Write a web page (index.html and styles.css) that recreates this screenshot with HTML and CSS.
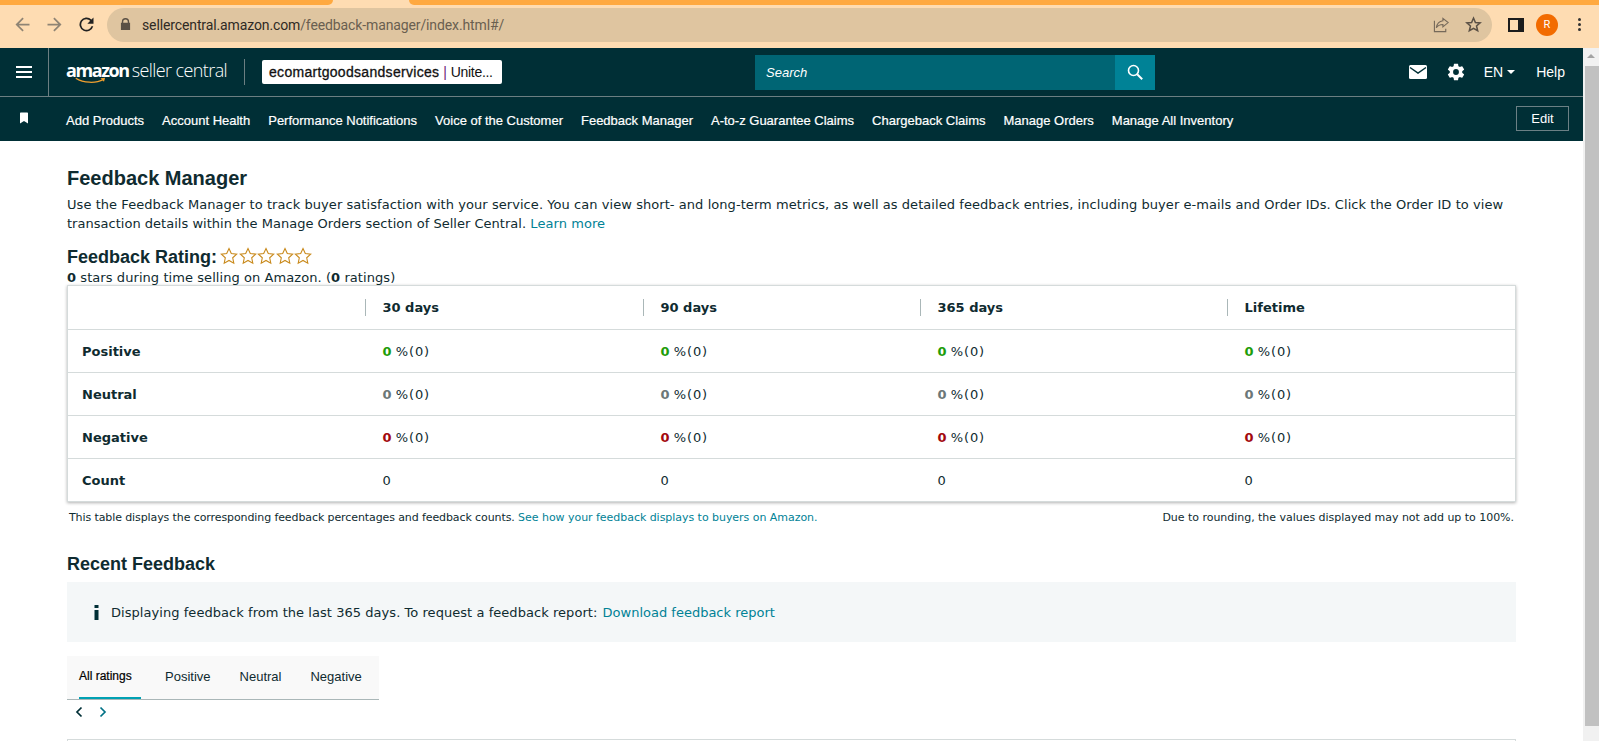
FILE: index.html
```html
<!DOCTYPE html>
<html lang="en">
<head>
    <meta charset="UTF-8">
    <title>Feedback Manager</title>
    <link rel="stylesheet" href="styles.css">
</head>
<body>
    <div class="tabstrip">
        <div class="tabstrip-left"></div>
        <div class="tabstrip-gap"></div>
        <div class="tabstrip-right"></div>
    </div>
    <div class="toolbar">
        <svg class="tb-icon" viewBox="0 0 24 24"><path d="M20 11H7.800l5.600-5.600L12 4l-8 8 8 8 1.400-1.400L7.800 13H20z" fill="#8f8474"/></svg>
        <svg class="tb-icon" viewBox="0 0 24 24"><path d="M4 11h12.200l-5.600-5.600L12 4l8 8-8 8-1.400-1.400 5.600-5.600H4z" fill="#8f8474"/></svg>
        <svg class="tb-icon" viewBox="0 0 24 24"><path d="M17.650 6.350A8 8 0 1 0 19.730 14h-2.080a6 6 0 1 1-1.410-6.240L13 11h7V4z" fill="#222"/></svg>
        <div class="omnibox">
            <svg class="lock" viewBox="0 0 12 14"><path d="M2 5V4a4 4 0 0 1 8 0v1h1v8H1V5zm1.500 0h5V4a2.500 2.500 0 0 0-5 0z" fill="#5a5045"/></svg>
            <span class="url"><span class="url-host">sellercentral.amazon.com</span>/feedback-manager/index.html#/</span>
            <svg class="omni-share" viewBox="0 0 18 18"><path d="M10.500 2.500 16 7l-5.500 4.500V9C7 9 5 10 3.500 12.500 4 9 6.500 5.500 10.500 5zM1.500 5v11.500h12v-3" fill="none" stroke="#75695a" stroke-width="1.200"/></svg>
            <svg class="omni-star" viewBox="0 0 18 18"><path d="M9 2.200l2 4.700 5 .4-3.800 3.300 1.200 5L9 13l-4.400 2.600 1.200-5L2 7.300l5-.4z" fill="none" stroke="#5a5045" stroke-width="1.600"/></svg>
        </div>
        <div class="sidepanel-icon"></div>
        <div class="avatar">R</div>
        <div class="dots"><i></i><i></i><i></i></div>
    </div>

    <div class="page">
        <div class="content">
            <header class="topbar">
                <button class="burger"><i></i><i></i><i></i></button>
                <div class="brand">
                    <span class="brand-amazon">amazon</span>
                    <span class="brand-seller">seller central</span>
                    <svg class="brand-smile" viewBox="0 0 44 9"><path d="M1 1.500C11 8 27 8.500 37 3" fill="none" stroke="#f0a030" stroke-width="1.600"/><path d="M33 1.500l6-.5-1.500 5z" fill="#f0a030"/></svg>
                </div>
                <div class="store-pill"><b>ecomartgoodsandservices</b> <span class="pipe">|</span> <span class="store-rest">Unite...</span></div>
                <div class="search">
                    <span class="search-input">Search</span>
                    <span class="search-btn">
                        <svg viewBox="0 0 18 18" width="18" height="18"><circle cx="7.500" cy="7.500" r="5" fill="none" stroke="#fff" stroke-width="1.600"/><path d="M11.200 11.200l5 5" stroke="#fff" stroke-width="2"/></svg>
                    </span>
                </div>
                <div class="top-actions">
                    <svg class="mail" viewBox="0 0 18 14"><rect width="18" height="14" rx="1.500" fill="#fff"/><path d="M1 2.500l8 5.500 8-5.500" fill="none" stroke="#002f36" stroke-width="1.500"/></svg>
                    <svg class="gear" viewBox="0 0 24 24"><path d="M19.430 12.980a7.800 7.800 0 0 0 0-1.960l2.110-1.650a.5.5 0 0 0 .12-.64l-2-3.460a.5.5 0 0 0-.61-.22l-2.490 1a7.300 7.300 0 0 0-1.690-.98l-.38-2.650A.49.49 0 0 0 14 2h-4a.49.49 0 0 0-.49.42l-.38 2.650a7.700 7.700 0 0 0-1.690.98l-2.490-1a.49.49 0 0 0-.61.22l-2 3.460a.49.49 0 0 0 .12.64l2.110 1.650a7.900 7.900 0 0 0 0 1.960l-2.110 1.650a.5.5 0 0 0-.12.64l2 3.460c.12.22.39.3.61.22l2.490-1c.52.4 1.080.73 1.690.98l.38 2.650c.03.24.24.42.49.42h4c.25 0 .46-.18.49-.42l.38-2.650a7.700 7.700 0 0 0 1.690-.98l2.490 1c.23.09.49 0 .61-.22l2-3.460a.5.5 0 0 0-.12-.64zM12 15.500a3.500 3.500 0 1 1 0-7 3.500 3.500 0 0 1 0 7z" fill="#fff"/></svg>
                    <span class="lang">EN<i class="caret"></i></span>
                    <span class="help">Help</span>
                </div>
            </header>
            <nav class="navbar">
                <svg class="bookmark" viewBox="0 0 10 12"><path d="M1 1.200Q1 .5 1.700.5h6.600q.7 0 .7.700V11.500L5 9 1 11.500z" fill="#fff"/></svg>
                <a>Add Products</a>
                <a>Account Health</a>
                <a>Performance Notifications</a>
                <a>Voice of the Customer</a>
                <a>Feedback Manager</a>
                <a>A-to-z Guarantee Claims</a>
                <a>Chargeback Claims</a>
                <a>Manage Orders</a>
                <a>Manage All Inventory</a>
                <button class="edit-btn">Edit</button>
            </nav>

            <main class="main">
                <h1 class="title">Feedback Manager</h1>
                <p class="intro">Use the Feedback Manager to track buyer satisfaction with your service. You can view short- and long-term metrics, as well as detailed feedback entries, including buyer e-mails and Order IDs. Click the Order ID to view <span class="intro-tail">transaction details within the Manage Orders section of Seller Central.</span> <a class="link">Learn more</a></p>
                <div class="rating-head">
                    <h2 class="subtitle">Feedback Rating:</h2>
                    <span class="stars">
                        <svg viewBox="0 0 18 18"><path d="M9 1.500l2.300 5 5.400.6-4 3.700 1.100 5.400L9 13.500l-4.800 2.700 1.100-5.400-4-3.700 5.400-.6z" fill="none" stroke="#c98a1c" stroke-width="1.100"/></svg>
                        <svg viewBox="0 0 18 18"><path d="M9 1.500l2.300 5 5.400.6-4 3.700 1.100 5.400L9 13.500l-4.800 2.700 1.100-5.400-4-3.700 5.400-.6z" fill="none" stroke="#c98a1c" stroke-width="1.100"/></svg>
                        <svg viewBox="0 0 18 18"><path d="M9 1.500l2.300 5 5.400.6-4 3.700 1.100 5.400L9 13.500l-4.800 2.700 1.100-5.400-4-3.700 5.400-.6z" fill="none" stroke="#c98a1c" stroke-width="1.100"/></svg>
                        <svg viewBox="0 0 18 18"><path d="M9 1.500l2.300 5 5.400.6-4 3.700 1.100 5.400L9 13.500l-4.800 2.700 1.100-5.400-4-3.700 5.400-.6z" fill="none" stroke="#c98a1c" stroke-width="1.100"/></svg>
                        <svg viewBox="0 0 18 18"><path d="M9 1.500l2.300 5 5.400.6-4 3.700 1.100 5.400L9 13.500l-4.800 2.700 1.100-5.400-4-3.700 5.400-.6z" fill="none" stroke="#c98a1c" stroke-width="1.100"/></svg>
                    </span>
                </div>
                <div class="rating-sub"><b>0</b> stars during time selling on Amazon. (<b>0</b> ratings)</div>

                <table class="fb-table">
                    <colgroup>
                        <col class="col-label"><col class="col-30"><col class="col-90"><col class="col-365"><col class="col-life">
                    </colgroup>
                    <thead>
                        <tr>
                            <th></th>
                            <th><span>30 days</span></th>
                            <th><span>90 days</span></th>
                            <th><span>365 days</span></th>
                            <th><span>Lifetime</span></th>
                        </tr>
                    </thead>
                    <tbody>
                        <tr>
                            <td class="row-name">Positive</td>
                            <td><b class="pos">0</b> <span class="pct">%(0)</span></td>
                            <td><b class="pos">0</b> <span class="pct">%(0)</span></td>
                            <td><b class="pos">0</b> <span class="pct">%(0)</span></td>
                            <td><b class="pos">0</b> <span class="pct">%(0)</span></td>
                        </tr>
                        <tr>
                            <td class="row-name">Neutral</td>
                            <td><b class="neu">0</b> <span class="pct">%(0)</span></td>
                            <td><b class="neu">0</b> <span class="pct">%(0)</span></td>
                            <td><b class="neu">0</b> <span class="pct">%(0)</span></td>
                            <td><b class="neu">0</b> <span class="pct">%(0)</span></td>
                        </tr>
                        <tr>
                            <td class="row-name">Negative</td>
                            <td><b class="neg">0</b> <span class="pct">%(0)</span></td>
                            <td><b class="neg">0</b> <span class="pct">%(0)</span></td>
                            <td><b class="neg">0</b> <span class="pct">%(0)</span></td>
                            <td><b class="neg">0</b> <span class="pct">%(0)</span></td>
                        </tr>
                        <tr>
                            <td class="row-name">Count</td>
                            <td>0</td>
                            <td>0</td>
                            <td>0</td>
                            <td>0</td>
                        </tr>
                    </tbody>
                </table>
                <div class="table-note">
                    <span class="note-left">This table displays the corresponding feedback percentages and feedback counts. <a class="link">See how your feedback displays to buyers on Amazon.</a></span>
                    <span class="note-right">Due to rounding, the values displayed may not add up to 100%.</span>
                </div>

                <h2 class="subtitle recent">Recent Feedback</h2>
                <div class="info-box">
                    <svg class="info-i" viewBox="0 0 5 15"><path d="M.5 0h4v3h-4zM.5 5h4v10h-4z" fill="#002f36"/></svg>
                    <span class="info-text">Displaying feedback from the last 365 days. To request a feedback report: <a class="link">Download feedback report</a></span>
                </div>
                <div class="tabs">
                    <a class="tab tab-active">All ratings</a>
                    <a class="tab">Positive</a>
                    <a class="tab">Neutral</a>
                    <a class="tab">Negative</a>
                </div>
                <div class="pager">
                    <svg viewBox="0 0 8 12"><path d="M6.500 1.500L2 6l4.500 4.500" fill="none" stroke="#002f36" stroke-width="1.700"/></svg>
                    <svg viewBox="0 0 8 12"><path d="M1.500 1.500L6 6l-4.500 4.500" fill="none" stroke="#007185" stroke-width="1.700"/></svg>
                </div>
                <div class="next-table"></div>
            </main>
        </div>
        <div class="scrollbar">
            <div class="scroll-up"></div>
            <div class="scroll-thumb"></div>
        </div>
    </div>
</body>
</html>
```

FILE: styles.css
```css
html, body {
    height: 100%;
}
body {
    margin: 0;
    overflow: hidden;
    background: #fff;
    color: #0f2b30;
    font-family: "DejaVu Sans", Verdana, sans-serif;
    font-size: 13px;
    display: flex;
    flex-direction: column;
}
a {
    text-decoration: none;
}
.link {
    color: #008296;
}

/* browser chrome */
.tabstrip {
    display: flex;
    height: 5px;
    flex: none;
    background: #fedcb2;
}
.tabstrip-left {
    width: 333px;
    background: #ffa940;
    border-radius: 0 0 5px 0;
}
.tabstrip-gap {
    width: 76px;
}
.tabstrip-right {
    flex: 1;
    background: #ffa940;
    border-radius: 0 0 0 5px;
}
.toolbar {
    height: 43px;
    flex: none;
    display: flex;
    align-items: center;
    padding-left: 12px;
    background: #fedcb2;
    box-sizing: border-box;
    padding-bottom: 4px;
}
.tb-icon {
    width: 21px;
    height: 21px;
    margin-right: 11px;
}
.omnibox {
    width: 1385px;
    height: 34px;
    margin-left: -1px;
    border-radius: 17px;
    background: #dfc5a0;
    display: flex;
    align-items: center;
    padding-left: 13px;
    box-sizing: border-box;
}
.lock {
    width: 11px;
    height: 13px;
    margin-right: 11px;
}
.url {
    flex: 1;
    font-family: "Roboto", "Liberation Sans", sans-serif;
    font-size: 14px;
    letter-spacing: -0.12px;
    color: #6a5f50;
}
.url-host {
    color: #2f2a24;
}
.omni-share {
    width: 17px;
    height: 17px;
    margin-right: 15px;
}
.omni-star {
    width: 17px;
    height: 17px;
    margin-right: 10px;
}
.sidepanel-icon {
    width: 8px;
    height: 10px;
    margin-left: 16px;
    border: 2px solid #1c1c1c;
    border-right-width: 6px;
    box-sizing: content-box;
}
.avatar {
    width: 22px;
    height: 22px;
    margin-left: 12px;
    border-radius: 50%;
    background: #f26b00;
    color: #fff;
    font-family: "Roboto", sans-serif;
    font-size: 11px;
    display: flex;
    align-items: center;
    justify-content: center;
}
.dots {
    margin-left: 20px;
    display: flex;
    flex-direction: column;
    gap: 2px;
}
.dots i {
    width: 3px;
    height: 3px;
    border-radius: 50%;
    background: #333;
}

/* page */
.page {
    flex: 1;
    display: flex;
    min-height: 0;
}
.content {
    flex: 1;
    min-width: 0;
    overflow: hidden;
}
.scrollbar {
    width: 16px;
    background: #f1f1f1;
    flex: none;
}
.scroll-up {
    margin: 6px auto 0;
    width: 0;
    height: 0;
    border-left: 4px solid transparent;
    border-right: 4px solid transparent;
    border-bottom: 4px solid #a3a3a3;
}
.scroll-thumb {
    margin: 8px 0 0 2px;
    height: 660px;
    background: #c1c1c1;
}

/* amazon header */
.topbar {
    height: 48px;
    background: #002f36;
    display: flex;
    align-items: center;
    border-bottom: 1px solid #6b7f82;
    font-family: "Liberation Sans", Arial, sans-serif;
}
.burger {
    width: 49px;
    height: 48px;
    padding: 0 16px;
    background: none;
    border: none;
    border-right: 1px solid #6b7f82;
    display: flex;
    flex-direction: column;
    justify-content: center;
    gap: 3px;
    box-sizing: border-box;
}
.burger i {
    display: block;
    height: 2px;
    background: #fff;
}
.brand {
    margin-left: 17px;
    width: 178px;
    height: 26px;
    border-right: 1px solid #6b7f82;
    position: relative;
    display: flex;
    align-items: baseline;
    gap: 3px;
    color: #fff;
    line-height: 22px;
}
.brand-amazon {
    font-family: "Open Sans", sans-serif;
    font-weight: 700;
    font-size: 18px;
    letter-spacing: -1.4px;
}
.brand-seller {
    font-family: "Open Sans", sans-serif;
    font-size: 18px;
    letter-spacing: -0.6px;
    font-weight: 300;
}
.brand-smile {
    position: absolute;
    left: 9px;
    top: 18px;
    width: 34px;
    height: 7px;
}
.store-pill {
    margin-left: 17px;
    width: 240px;
    height: 24px;
    line-height: 24px;
    background: #fff;
    border-radius: 2px;
    padding-left: 7px;
    box-sizing: border-box;
    color: #111;
    font-size: 14px;
    white-space: nowrap;
}
.store-pill b {
    font-weight: 400;
    letter-spacing: 0.3px;
    -webkit-text-stroke: 0.3px #111;
}
.store-rest {
    letter-spacing: -0.3px;
}
.pipe {
    color: #6b1f7a;
}
.search {
    margin-left: 253px;
    width: 400px;
    height: 35px;
    display: flex;
    background: #006574;
}
.search-input {
    flex: 1;
    padding-left: 11px;
    line-height: 35px;
    color: #fff;
    font-style: italic;
    font-size: 13px;
}
.search-btn {
    width: 40px;
    background: #008296;
    display: flex;
    align-items: center;
    justify-content: center;
}
.top-actions {
    margin-left: auto;
    padding-right: 18px;
    display: flex;
    align-items: center;
    color: #fff;
    font-size: 14px;
}
.mail {
    width: 18px;
    height: 14px;
    margin-right: 19px;
}
.gear {
    width: 20px;
    height: 20px;
    margin-right: 18px;
}
.lang {
    display: flex;
    align-items: center;
    margin-right: 21px;
}
.caret {
    margin-left: 4px;
    width: 0;
    height: 0;
    border-left: 4px solid transparent;
    border-right: 4px solid transparent;
    border-top: 4px solid #fff;
}
.navbar {
    height: 44px;
    background: #002f36;
    display: flex;
    align-items: center;
    gap: 18px;
    font-family: "Liberation Sans", Arial, sans-serif;
    font-size: 13px;
    color: #fff;
    padding-right: 14px;
}
.navbar a {
    padding-top: 2px;
    -webkit-text-stroke: 0.2px #fff;
}
.bookmark {
    width: 10px;
    height: 12px;
    margin: -2px 19px 0 19px;
}
.edit-btn {
    margin-left: auto;
    margin-top: -2px;
    width: 53px;
    height: 25px;
    background: transparent;
    border: 1px solid #6b8085;
    color: #fff;
    font-family: "Liberation Sans", Arial, sans-serif;
    font-size: 13px;
    padding: 0;
}

/* main */
.main {
    padding: 0 67px;
}
.title {
    margin: 25px 0 0;
    font-family: "Liberation Sans", Arial, sans-serif;
    font-size: 20px;
    font-weight: 700;
    line-height: 24px;
}
.intro {
    margin: 5px 0 0;
    line-height: 19px;
    letter-spacing: 0.06px;
}
.intro-tail {
    letter-spacing: 0.02px;
}
.rating-head {
    margin-top: 13px;
    display: flex;
    align-items: center;
    gap: 3px;
}
.subtitle {
    margin: 0;
    font-family: "Liberation Sans", Arial, sans-serif;
    font-size: 18px;
    font-weight: 700;
    line-height: 22px;
}
.stars {
    display: flex;
    margin-top: -3px;
}
.stars svg {
    width: 18px;
    height: 18px;
    margin-right: 0.6px;
}
.rating-sub {
    margin-top: 2px;
    line-height: 15px;
    letter-spacing: 0.07px;
}
.fb-table {
    width: 1449px;
    height: 216px;
    table-layout: fixed;
    border-collapse: collapse;
    border: 1px solid #d5dbdb;
    box-shadow: 0 1px 3px rgba(0, 0, 0, 0.3);
}
.col-label { width: 297px; }
.col-30 { width: 278px; }
.col-90 { width: 277px; }
.col-365 { width: 307px; }
.fb-table th {
    text-align: left;
    padding: 0 0 1px;
    height: 42px;
}
.fb-table th span {
    display: block;
    border-left: 1px solid #aab7b8;
    padding-left: 17px;
    line-height: 17px;
}
.fb-table td {
    border-top: 1px solid #d5dbdb;
    padding: 0 0 0 18px;
    height: 42px;
}
.fb-table td.row-name {
    padding-left: 14px;
    font-weight: 700;
}
.pct {
    letter-spacing: 0.9px;
}
.pos { color: #1f9d0b; }
.neu { color: #6c7778; }
.neg { color: #a3080e; }
.table-note {
    margin-top: 8px;
    display: flex;
    justify-content: space-between;
    padding: 0 2px;
    font-size: 11px;
    line-height: 15px;
}
.note-left {
    letter-spacing: -0.1px;
}
.note-left .link {
    letter-spacing: -0.04px;
}
.note-right {
    letter-spacing: -0.03px;
}
.recent {
    margin-top: 28px;
}
.info-box {
    margin-top: 7px;
    height: 60px;
    background: #f4f7f8;
    display: flex;
    align-items: center;
    gap: 12px;
    padding-left: 27px;
}
.info-i {
    width: 5px;
    height: 15px;
}
.info-text {
    letter-spacing: 0.05px;
}
.info-text .link {
    margin-left: 1px;
    letter-spacing: 0;
}
.tabs {
    margin-top: 14px;
    width: 312px;
    height: 44px;
    display: flex;
    gap: 29px;
    padding-left: 12px;
    box-sizing: border-box;
    background: #f9f9f9;
    border-bottom: 1px solid #aab7b8;
    font-family: "Liberation Sans", Arial, sans-serif;
    font-size: 13px;
}
.tab {
    line-height: 41px;
    height: 41px;
}
.tab-active {
    color: #000;
    font-size: 12px;
    -webkit-text-stroke: 0.2px #000;
    border-bottom: 2px solid #00a1b3;
    margin-right: -5px;
    width: 62px;
}
.pager {
    margin-top: 6px;
    padding-left: 8px;
    display: flex;
    gap: 16px;
    height: 12px;
}
.pager svg {
    width: 8px;
    height: 12px;
}
.next-table {
    margin-top: 21px;
    height: 20px;
    border: 1px solid #d5dbdb;
}
```
